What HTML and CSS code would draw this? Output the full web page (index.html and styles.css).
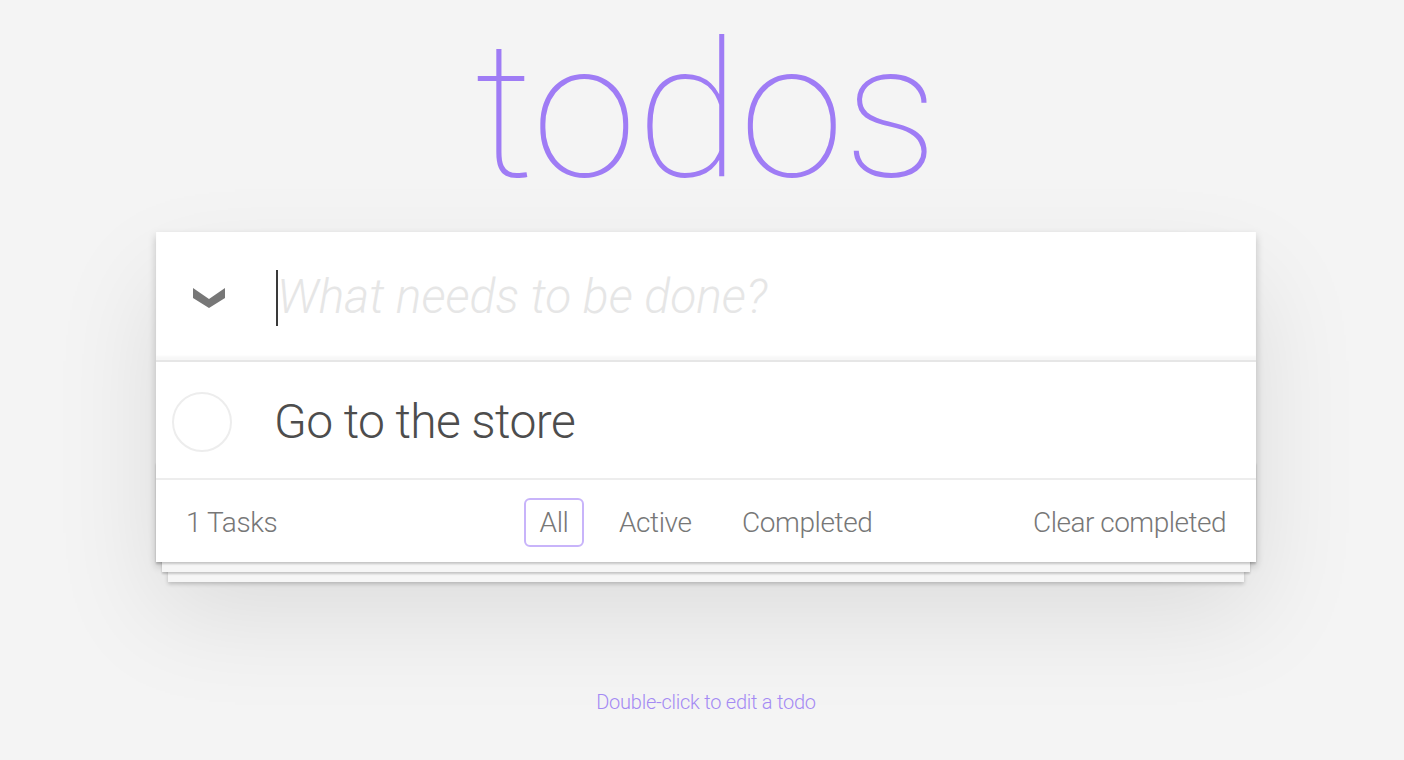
FILE: index.html
```html
<!DOCTYPE html>
<html lang="en">
<head>
  <meta charset="UTF-8">
  <meta name="viewport" content="width=device-width, initial-scale=1.0">
  <title>Todos</title>
  <link rel="stylesheet" href="styles.css">
</head>
<body>
  <section class="todoapp">
    <h1>todos</h1>
    <div class="card">
      <header class="header">
        <label class="toggle-all" for="new-todo">
          <svg width="32" height="20" viewBox="0 0 32 20"><polygon points="0,0 16,11 32,0 32,10 16,20 0,10" fill="#777"/></svg>
        </label>
        <div class="input-wrap">
          <input class="new-todo" id="new-todo" placeholder="What needs to be done?" autofocus>
          <span class="caret"></span>
        </div>
      </header>
      <section class="main">
        <ul class="todo-list">
          <li>
            <span class="toggle"></span>
            <label class="todo-label">Go to the store</label>
          </li>
        </ul>
      </section>
      <footer class="footer">
        <span class="todo-count">1 Tasks</span>
        <ul class="filters">
          <li><a href="#/" class="selected">All</a></li>
          <li><a href="#/active">Active</a></li>
          <li><a href="#/completed">Completed</a></li>
        </ul>
        <button class="clear-completed">Clear completed</button>
      </footer>
    </div>
  </section>
  <footer class="info">
    <p>Double-click to edit a todo</p>
  </footer>
</body>
</html>
```
FILE: styles.css
```css
html, body {
  margin: 0;
  padding: 0;
}

body {
  font-family: Roboto, "Liberation Sans", sans-serif;
  font-weight: 300;
  font-size: 28px;
  line-height: 1.4;
  background-color: #f4f4f4;
  color: #111;
  padding-left: 8px;
}

.todoapp {
  width: 1100px;
  margin: 0 auto;
}

.todoapp h1 {
  margin: 0 0 9px;
  font-size: 190px;
  font-weight: 100;
  line-height: 223px;
  letter-spacing: -0.5px;
  text-align: center;
  color: #9f7cf5;
}

.card {
  background-color: #fff;
  box-shadow: 0 4px 8px 0 rgba(0, 0, 0, 0.2), 0 50px 100px 0 rgba(0, 0, 0, 0.1);
}

.header {
  display: flex;
  align-items: center;
  height: 128px;
  box-shadow: inset 0 -4px 2px rgba(0, 0, 0, 0.03);
}

.toggle-all {
  width: 120px;
  padding: 4px 0 0 37px;
  box-sizing: border-box;
  display: flex;
}

.input-wrap {
  flex: 1;
  height: 100%;
  position: relative;
}

.new-todo {
  width: 100%;
  height: 100%;
  box-sizing: border-box;
  border: none;
  outline: none;
  padding: 1px 32px 0 1px;
  font-family: inherit;
  font-size: 48px;
  font-weight: 300;
  color: #4d4d4d;
  caret-color: transparent;
  background: transparent;
}

.new-todo::placeholder {
  font-style: italic;
  font-weight: 300;
  color: #e6e6e6;
}

.caret {
  position: absolute;
  left: 0;
  top: 38px;
  width: 2px;
  height: 56px;
  background-color: #3a3a3a;
}

.main {
  border-top: 2px solid #e6e6e6;
}

.todo-list {
  margin: 0;
  padding: 0;
  list-style: none;
}

.todo-list li {
  display: flex;
  align-items: center;
  border-bottom: 2px solid #ededed;
}

.toggle {
  width: 56px;
  height: 56px;
  margin: 4px 32px 0 16px;
  border: 2px solid #ededed;
  border-radius: 50%;
}

.todo-label {
  padding: 31px 30px 27px 10px;
  font-size: 48px;
  line-height: 58px;
  letter-spacing: -0.6px;
  color: #4d4d4d;
}

.footer {
  position: relative;
  height: 40px;
  padding: 23px 30px 19px;
  color: #777;
  text-align: center;
  line-height: 40px;
  letter-spacing: -0.4px;
}

.footer:before {
  content: '';
  position: absolute;
  right: 0;
  bottom: 0;
  left: 0;
  height: 100px;
  overflow: hidden;
  box-shadow: 0 2px 2px rgba(0, 0, 0, 0.2),
              0 16px 0 -6px #f6f6f6,
              0 18px 2px -6px rgba(0, 0, 0, 0.2),
              0 32px 0 -12px #f6f6f6,
              0 34px 4px -12px rgba(0, 0, 0, 0.2);
}

.todo-count {
  float: left;
  position: relative;
}

.filters {
  margin: 0;
  padding: 0;
  list-style: none;
  position: absolute;
  right: 0;
  left: 0;
  top: 23px;
}

.filters li {
  display: inline;
}

.filters li a {
  color: inherit;
  margin: 6px;
  padding: 6px 14px;
  text-decoration: none;
  border: 2px solid transparent;
  border-radius: 6px;
}

.filters li a.selected {
  border-color: #c8b4fa;
}

.clear-completed {
  float: right;
  position: relative;
  margin: 0;
  padding: 0;
  border: none;
  background: none;
  font-family: inherit;
  font-size: 28px;
  font-weight: 300;
  line-height: 40px;
  letter-spacing: -0.5px;
  color: #777;
  cursor: pointer;
}

.info {
  margin: 130px auto 0;
  text-align: center;
  color: #a48af3;
  font-size: 20px;
  letter-spacing: -0.25px;
}

.info p {
  margin: 0;
  line-height: 1;
}
```
